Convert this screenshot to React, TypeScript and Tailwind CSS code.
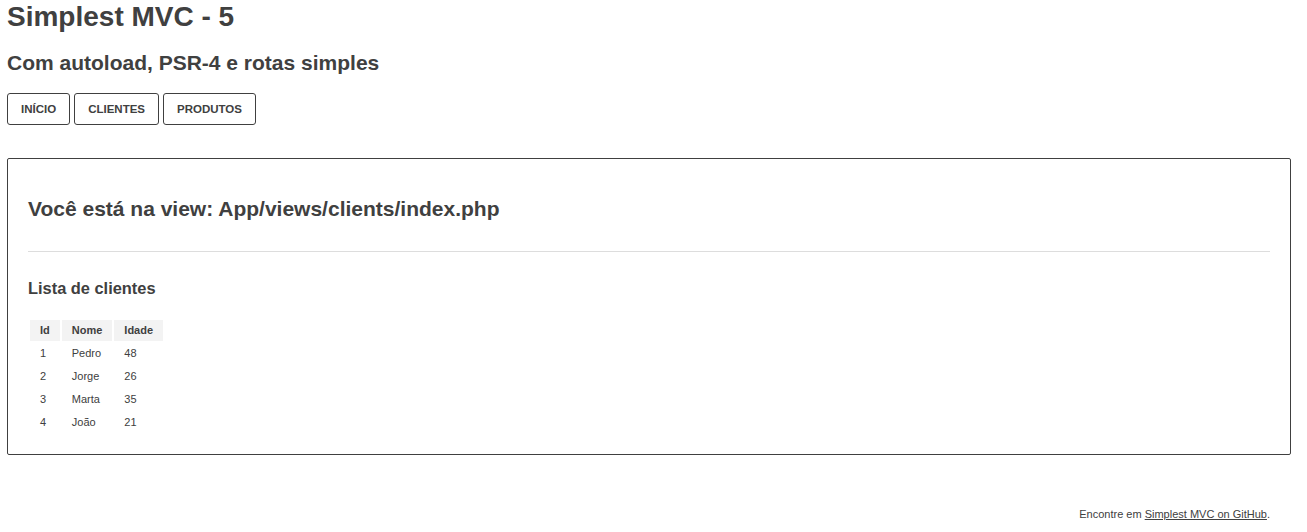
import React from 'react';

const clients = [
  { id: 1, name: 'Pedro', age: 48 },
  { id: 2, name: 'Jorge', age: 26 },
  { id: 3, name: 'Marta', age: 35 },
  { id: 4, name: 'João', age: 21 },
];

const links = ['Início', 'Clientes', 'Produtos'];

const App: React.FC = () => {
  return (
    <div
      className="min-h-[532px] bg-white pl-[7px] pr-[16px] text-[#404040]"
      style={{ fontFamily: '"Liberation Sans", Arial, sans-serif' }}
    >
      <h1 className="pt-[1px] text-[28px] leading-[32px] font-bold">Simplest MVC - 5</h1>
      <h3 className="mt-[18px] text-[21px] leading-[24px] font-bold">Com autoload, PSR-4 e rotas simples</h3>

      <nav className="mt-[18px] flex gap-[4px]">
        {links.map(link => (
          <a
            key={link}
            href="#"
            className="flex h-[32px] items-center rounded-[3px] border border-[#404040] bg-white px-[13px] text-[11.5px] leading-[13px] font-bold uppercase text-[#404040]"
          >
            {link}
          </a>
        ))}
      </nav>

      <main className="mt-[33px] rounded-[2px] border border-[#404040] px-[20px] pt-[38px] pb-[19px]">
        <h2 className="text-[21px] leading-[24px] font-bold">Você está na view: App/views/clients/index.php</h2>
        <hr className="mt-[30px] border-0 border-t border-[#dddddd]" />

        <h4 className="mt-[27px] text-[16.4px] leading-[18px] font-bold">Lista de clientes</h4>

        <table className="mt-[21px] border-separate border-spacing-[2px] text-[11px] leading-[13px]">
          <thead>
            <tr className="bg-[#f3f3f3]">
              <th className="h-[21px] px-[10px] text-left font-bold">Id</th>
              <th className="h-[21px] px-[10px] text-left font-bold">Nome</th>
              <th className="h-[21px] px-[10px] text-left font-bold">Idade</th>
            </tr>
          </thead>
          <tbody>
            {clients.map(c => (
              <tr key={c.id}>
                <td className="h-[21px] px-[10px]">{c.id}</td>
                <td className="h-[21px] px-[10px]">{c.name}</td>
                <td className="h-[21px] px-[10px]">{c.age}</td>
              </tr>
            ))}
          </tbody>
        </table>
      </main>

      <footer className="mt-[53px] pr-[21px] text-right text-[11px] leading-[13px]">
        Encontre em{' '}
        <a href="#" className="underline">
          Simplest MVC on GitHub
        </a>
        .
      </footer>
    </div>
  );
};

export default App;
